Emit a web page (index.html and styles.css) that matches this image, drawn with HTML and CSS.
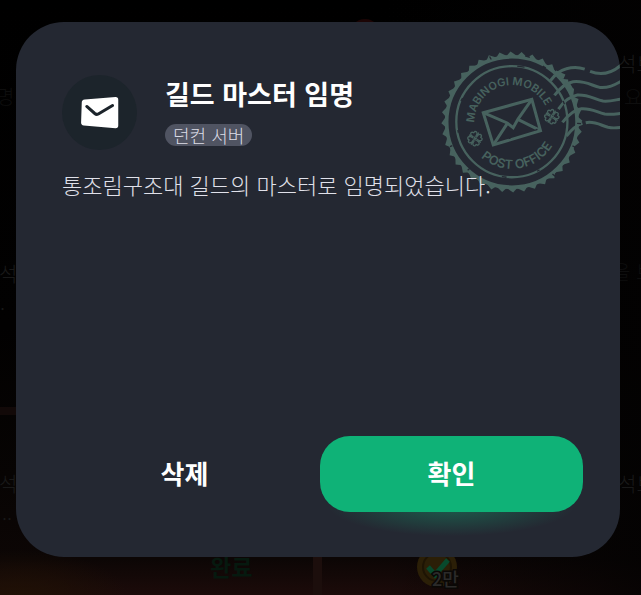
FILE: index.html
```html
<!DOCTYPE html>
<html lang="ko">
<head>
<meta charset="utf-8">
<meta name="viewport" content="width=device-width, initial-scale=1">
<title>길드 마스터 임명</title>
<link rel="stylesheet" href="styles.css">
</head>
<body>
<svg class="scene" viewBox="0 0 641 595" preserveAspectRatio="xMidYMid slice" aria-hidden="true">
  <defs>
    <linearGradient id="glow" x1="0" y1="0" x2="0" y2="1">
      <stop offset="0" stop-color="#000"/>
      <stop offset=".55" stop-color="#020101"/>
      <stop offset=".8" stop-color="#070403"/>
      <stop offset=".94" stop-color="#0c0605"/>
      <stop offset="1" stop-color="#1c0b0a"/>
    </linearGradient>
    <radialGradient id="ember">
      <stop offset="0" stop-color="#201105"/>
      <stop offset="1" stop-color="#201105" stop-opacity="0"/>
    </radialGradient>
    <linearGradient id="fade" x1="0" y1="0" x2="1" y2="0">
      <stop offset=".6" stop-color="#030202" stop-opacity="0"/>
      <stop offset="1" stop-color="#030202" stop-opacity=".8"/>
    </linearGradient>
  </defs>
  <rect width="641" height="595" fill="url(#glow)"/>
  <ellipse cx="20" cy="600" rx="110" ry="50" fill="url(#ember)"/>
  <rect width="641" height="595" fill="url(#fade)"/>
  <circle cx="365" cy="34" r="15" fill="#1c0505"/>
  <rect y="407" width="17" height="8" fill="#120908"/>
  <rect x="313" y="555" width="9" height="40" fill="#1c0e0c"/>
  <g class="scene-text">
    <text class="scene-faint" x="-4" y="105">명</text>
    <text x="-1" y="282">석</text>
    <text x="0" y="311">.</text>
    <text x="-1" y="492">석</text>
    <text x="2" y="521">..</text>
    <text x="618" y="72">석브</text>
    <text class="scene-faint" x="624" y="105">요</text>
    <text class="scene-faint" x="612" y="280">을 보</text>
    <text x="618" y="492">석브</text>
  </g>
  <text class="scene-done" x="210" y="576">완료</text>
  <circle cx="437" cy="567" r="20" fill="#2b1f07"/>
  <circle cx="437" cy="567" r="14" fill="none" stroke="#1d1404" stroke-width="2"/>
  <path d="M428 567l7 8 13-15" fill="none" stroke="#08492c" stroke-width="5"/>
  <text class="scene-count" x="432" y="586">2만</text>
</svg>

<main class="overlay">
  <section class="mail" role="dialog" aria-modal="true" aria-labelledby="mail-title">
    <svg class="stamp" viewBox="30 30 541 432" aria-hidden="true">
      <defs>
        <path id="arc-top" d="M133 248a113 113 0 0 1 226 0"/>
        <path id="arc-bottom" d="M105 246a141 141 0 0 0 282 0"/>
        <path id="tooth" d="M228 50l14-16 22 15z"/>
        <g id="teeth">
          <use href="#tooth"/>
          <use href="#tooth" transform="rotate(9 246 246)"/>
          <use href="#tooth" transform="rotate(18 246 246)"/>
          <use href="#tooth" transform="rotate(27 246 246)"/>
          <use href="#tooth" transform="rotate(36 246 246)"/>
        </g>
        <path id="petal" d="M-3-5L-9-12Q-11-21-4-21L0-18L4-21Q11-21 9-12L3-5"/>
        <g id="flower">
          <use href="#petal"/>
          <use href="#petal" transform="rotate(90)"/>
          <use href="#petal" transform="rotate(180)"/>
          <use href="#petal" transform="rotate(270)"/>
          <path d="M-9-9l-6-6M9-9l6-6M-9 9l-6 6M9 9l6 6M0-6V6M-6 0H6"/>
        </g>
      </defs>
      <g class="stamp-fill">
        <use href="#teeth"/>
        <use href="#teeth" transform="rotate(45 246 246)"/>
        <use href="#teeth" transform="rotate(90 246 246)"/>
        <use href="#teeth" transform="rotate(135 246 246)"/>
        <use href="#teeth" transform="rotate(180 246 246)"/>
        <use href="#teeth" transform="rotate(225 246 246)"/>
        <use href="#teeth" transform="rotate(270 246 246)"/>
        <use href="#teeth" transform="rotate(315 246 246)"/>
      </g>
      <g class="stamp-line">
        <circle cx="246" cy="246" r="196" stroke-width="11"/>
        <circle cx="246" cy="245" r="167" stroke-width="7"/>
        <path d="M160 218L306 178L332 272L190 315Z"/>
        <path d="M160 218L232 249L250 263L264 238L306 178M190 315L232 251M332 272L264 238"/>
        <path d="M362 122C375 104 390 91 410 86C430 80 448 81 465 87M481 94C515 107 545 100 573 76"/>
        <path d="M374 166C392 142 407 129 430 125C465 121 485 136 510 142C535 145 555 135 573 124"/>
        <path d="M386 207C402 184 420 169 443 165C475 163 495 178 520 183C540 185 555 180 573 177"/>
        <path d="M398 247C416 224 432 209 455 206C485 204 500 216 525 222C545 225 558 222 573 220"/>
        <path d="M410 288C424 270 438 256 458 250M468 248C495 242 515 257 535 262C550 265 560 264 573 262"/>
        <path d="M376 98L404 110M412 130L424 150" stroke-width="15"/>
      </g>
      <g class="stamp-mark">
        <use href="#flower" transform="translate(135 296) rotate(-12)"/>
        <use href="#flower" transform="translate(366 230) rotate(-12)"/>
      </g>
      <g class="stamp-wear">
        <path d="M262 78l22 3M93 183l5-9M84 270l1 8M216 410l14 2M322 394l7-4M404 193l-4-10M286 47l14 5M339 78l9 6M60 320l7-3M442 250l12 1M428 318l9 4M113 391l8-7M236 296l6-2M317 270l6-2M184 58l-5-9M368 402l8 7"/>
      </g>
      <text class="stamp-text"><textPath href="#arc-top">MABINOGI MOBILE</textPath></text>
      <text class="stamp-text stamp-text-wide"><textPath href="#arc-bottom" startOffset="120">POST OFFICE</textPath></text>
    </svg>

    <header class="mail-head">
      <svg class="mail-icon" viewBox="33 45 224 224" aria-hidden="true">
        <circle cx="145" cy="157" r="112" fill="#1c242b"/>
        <path d="M101 118L193 111Q201 111 201 119V196Q201 204 193 204L98 196Q90 195 90 187L92 127Q92 119 101 118Z" fill="#fff"/>
        <path d="M107 139L131 160Q137 165 144 160L184 136" fill="none" stroke="#1c242b" stroke-width="9" stroke-linecap="round"/>
      </svg>
      <div class="mail-heading">
        <h1 class="mail-title" id="mail-title">길드 마스터 임명</h1>
        <span class="mail-server">던컨 서버</span>
      </div>
    </header>
    <p class="mail-message">통조림구조대 길드의 마스터로 임명되었습니다.</p>
    <footer class="mail-actions">
      <button class="button" type="button">삭제</button>
      <button class="button button-primary" type="button">확인</button>
    </footer>
  </section>
</main>
</body>
</html>
```
FILE: styles.css
```css
* {
  box-sizing: border-box;
}

body {
  margin: 0;
  background: #000;
  font-family: "Noto Sans CJK KR", "Noto Sans", sans-serif;
  color: #fff;
}

.scene {
  position: fixed;
  inset: 0;
  width: 100%;
  height: 100%;
}

.scene-text {
  fill: #191919;
  font-size: 20px;
  font-weight: 300;
}

.scene-faint {
  fill: #0e0e0e;
}

.scene-done {
  fill: #06190f;
  font-size: 23px;
  font-weight: 700;
}

.scene-count {
  fill: #2b2a29;
  stroke: #0a0806;
  stroke-width: 3px;
  paint-order: stroke;
  font-size: 18px;
  font-weight: 500;
}

.overlay {
  position: relative;
  display: flex;
  min-height: 100vh;
  padding: 22px 21px 38px 16px;
}

.mail {
  position: relative;
  isolation: isolate;
  display: flex;
  flex: 1;
  flex-direction: column;
  padding: 53px 37px 45px;
  border-radius: 48px;
  background: #242832;
  overflow: hidden;
}

.stamp {
  position: absolute;
  z-index: -1;
  top: 28px;
  right: 0;
  width: 180px;
  height: 144px;
}

.stamp-fill {
  fill: #47625e;
}

.stamp-line {
  fill: none;
  stroke: #47625e;
  stroke-width: 9px;
}

.stamp-mark {
  fill: none;
  stroke: #47625e;
  stroke-width: 4px;
}

.stamp-wear {
  fill: none;
  stroke: #242832;
  stroke-width: 4px;
}

.stamp-text {
  fill: #47625e;
  font-family: Inter, sans-serif;
  font-size: 33px;
  font-weight: 600;
}

.stamp-text-wide {
  font-size: 38px;
}

.mail-head {
  display: flex;
  gap: 28px;
  padding-left: 9px;
}

.mail-icon {
  width: 75px;
  height: 75px;
}

.mail-heading {
  display: flex;
  flex-direction: column;
  align-items: flex-start;
  gap: 12px;
}

.mail-title {
  margin: 0;
  font-size: 27px;
  font-weight: 700;
  line-height: 37px;
}

.mail-server {
  padding: 0 8px;
  border-radius: 11px;
  background: #505462;
  color: #dcdde6;
  font-size: 18px;
  font-weight: 300;
  line-height: 22px;
}

.mail-message {
  margin: 20px 9px;
  color: #e0e1ea;
  font-size: 22px;
  font-weight: 300;
  line-height: 28px;
}

.mail-actions {
  display: grid;
  grid-template-columns: 1fr 1fr;
  gap: 4px;
  margin-top: auto;
}

.button {
  height: 76px;
  padding: 0 0 4px;
  border: 0;
  border-radius: 30px;
  background: transparent;
  color: #fff;
  font: inherit;
  font-size: 26px;
  font-weight: 700;
}

.button-primary {
  position: relative;
  background: #0fb277;
}

.button-primary::after {
  content: "";
  position: absolute;
  z-index: -1;
  inset: 50% 8px -24px;
  background: radial-gradient(closest-side, #0fb277, transparent);
  opacity: 0.4;
}
```
